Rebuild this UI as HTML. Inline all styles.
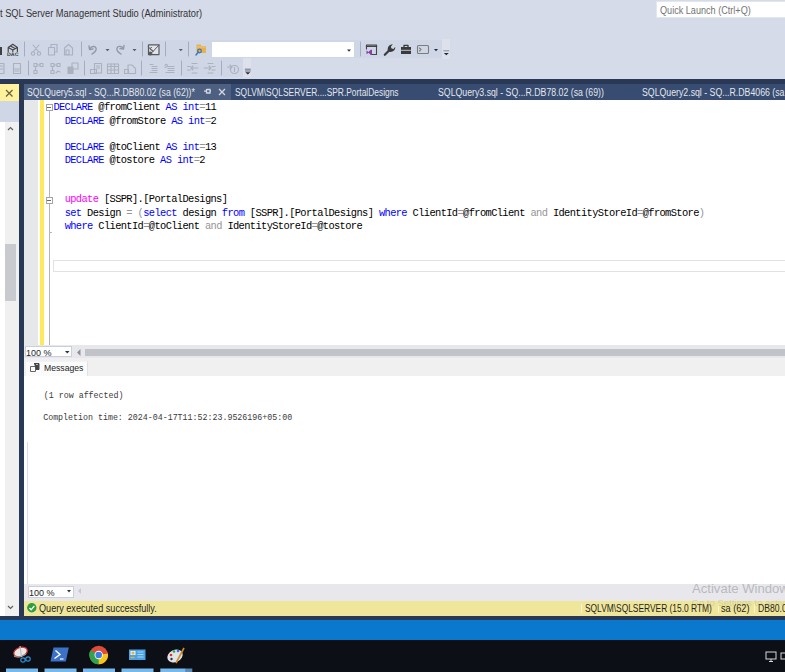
<!DOCTYPE html>
<html><head><meta charset="utf-8">
<style>
*{margin:0;padding:0;box-sizing:border-box}
html,body{width:785px;height:672px;overflow:hidden;background:#d6dbe9;font-family:"Liberation Sans",sans-serif}
.a{position:absolute}
.t{position:absolute;white-space:pre;transform-origin:0 0;line-height:1}
.code{position:absolute;font-family:"Liberation Mono",monospace;font-size:10.4px;letter-spacing:-0.625px;white-space:pre;line-height:13.16px;color:#000}
.k{color:#0000ff}.m{color:#ff00ff}.g{color:#959595}
.tab{color:#e3e7ef;font-size:10px}
svg{position:absolute;left:0;top:0;overflow:visible}
</style></head><body>
<!-- title -->
<div class="t" style="left:-0.5px;top:8.8px;font-size:10px;color:#333;transform:scaleX(0.927)">t SQL Server Management Studio (Administrator)</div>
<div class="a" style="left:656px;top:1px;width:129px;height:17px;background:#fff;border:1px solid #e3e6ee;border-right:none"></div>
<div class="t" style="left:660px;top:5.8px;font-size:10px;color:#747474;transform:scaleX(0.91)">Quick Launch (Ctrl+Q)</div>

<!-- toolbars -->
<div class="a" style="left:0;top:40px;width:442px;height:18px;background:#cfd6e5"></div>
<div class="a" style="left:442px;top:39px;width:8px;height:20px;background:#dde1ec"></div>
<div class="a" style="left:0;top:58px;width:243px;height:19px;background:#cfd6e5"></div>
<div class="a" style="left:243px;top:58px;width:8px;height:19px;background:#dde1ec"></div>
<div class="a" style="left:212px;top:42px;width:142px;height:15px;background:#fff"></div>

<svg width="785" height="80" viewBox="0 0 785 80">
 <g fill="none" stroke-linecap="round" stroke-linejoin="round">
  <!-- separators row1 -->
  <g stroke="#a5adbd" stroke-width="1">
   <line x1="24.5" y1="42" x2="24.5" y2="56"/><line x1="81.5" y1="42" x2="81.5" y2="56"/>
   <line x1="142.5" y1="42" x2="142.5" y2="56"/><line x1="165.5" y1="42" x2="165.5" y2="56"/>
   <line x1="188.5" y1="42" x2="188.5" y2="56"/><line x1="360.5" y1="42" x2="360.5" y2="56"/>
   <line x1="28.5" y1="61" x2="28.5" y2="75"/><line x1="84.5" y1="61" x2="84.5" y2="75"/>
   <line x1="141.5" y1="61" x2="141.5" y2="75"/><line x1="181.5" y1="61" x2="181.5" y2="75"/>
   <line x1="221.5" y1="61" x2="221.5" y2="75"/>
  </g>
  <!-- partial dark icon -->
  <path d="M-1 47h3v8h-3z" fill="#404040" stroke="none"/>
  <!-- DAC icon -->
  <path d="M8.2 51.5 V47.5 L12.8 44.3 L17.4 47.5 V51.5 M8.2 47.5 L12.8 50 L17.4 47.5 M12.8 50 V51.5 M10.5 46 L15 48.6" stroke="#454545" stroke-width="1.2"/>
  <path d="M7 52.2 h11.5 v3.8 h-11.5z" fill="#cfd6e5" stroke="none"/>
  <text x="7" y="56" font-size="5" font-family="Liberation Sans" font-weight="bold" fill="#3a3a3a" textLength="11.5" lengthAdjust="spacingAndGlyphs" style="text-rendering:geometricPrecision">DAC</text>
  <!-- scissors -->
  <g stroke="#abb1be" stroke-width="1.1">
   <path d="M33 45 L39 52 M39 45 L33 52"/><circle cx="33" cy="53.5" r="1.7"/><circle cx="39" cy="53.5" r="1.7"/>
  </g>
  <!-- copy -->
  <g stroke="#abb1be" stroke-width="1.1">
   <rect x="48.5" y="47.5" width="6" height="7.5"/><path d="M51 47.5 V44.5 H57 V52 H54.5"/>
  </g>
  <!-- paste -->
  <g stroke="#abb1be" stroke-width="1.1">
   <path d="M64.5 55 V48 L68.5 44.5 L72.5 48 V55 Z"/><rect x="66" y="50" width="3" height="4.5"/>
  </g>
  <!-- undo -->
  <path d="M89 46 L89.5 49.5 L93 49 M89.5 49 C92 45 97 46 96 50 C95.5 52 93.5 53 92 54" stroke="#9299a8" stroke-width="1.4"/>
  <path d="M105.5 49 h4 l-2 2.2z" fill="#5a5f6a" stroke="none"/>
  <!-- redo -->
  <path d="M124 45.5 L123.5 49 L120 48.5 M123.5 48.5 C121 45 116 46 117 50 C117.5 52 119.5 53 121 54" stroke="#9299a8" stroke-width="1.4"/>
  <path d="M132.5 49 h4 l-2 2.2z" fill="#5a5f6a" stroke="none"/>
  <!-- query designer -->
  <g stroke="#5a5a5a" stroke-width="1.2">
   <rect x="148.5" y="44.8" width="10.5" height="9.8" fill="#dfe3ec"/><path d="M148.5 47 L153 51.5 L159 45" stroke-width="1"/><path d="M151.5 47.5 c-2 0 -2 2.5 0 2.5 c2 0 2 2.5 0 2.5" stroke-width="1"/><circle cx="150.3" cy="53.5" r="1.5" fill="#5a5a5a"/>
  </g>
  <path d="M178.8 49 h4 l-2 2.2z" fill="#5a5f6a" stroke="none"/>
  <!-- folder key -->
  <path d="M196.5 44.5 h4 l1.2 1.5 h4.3 v7 h-9.5z" fill="#e8b04e" stroke="none"/><path d="M197.5 47 h8" stroke="#f3cf86" stroke-width="0.8"/>
  <circle cx="199.5" cy="51" r="1.8" stroke="#3878c0" stroke-width="1.3"/><path d="M198.3 52.3 L196 55" stroke="#3878c0" stroke-width="1.4"/>
  <!-- combobox arrow -->
  <path d="M347 49.5 h4 l-2 2.2z" fill="#333" stroke="none"/>
  <!-- VS window icon -->
  <g stroke="#444" stroke-width="1.1"><path d="M366.5 49 V45 H376.5 V54.5 H371"/><path d="M366.5 46.2 H376.5" stroke-width="1.6"/></g>
  <path d="M366.5 50.5 L368.5 52 L371 49.5 L372 50 V54.5 L371 55 L368.5 52.8 L366.5 54.3 Z" fill="#8a3fa8" stroke="none"/>
  <!-- wrench -->
  <path d="M384.8 54.8 L389.8 49.8" stroke="#3a3a3a" stroke-width="2.2"/>
  <path d="M388.2 51.5 C386.8 48.5 388.5 44.5 392.8 44.3 L390.8 46.8 L391.6 48.6 L393.6 48.9 L395.2 46.8 C395.6 50.8 392 52.8 388.2 51.5 Z" fill="#3a3a3a" stroke="none"/>
  <!-- toolbox -->
  <path d="M404 47.5 V45.3 H408 V47.5" stroke="#3a3a3a" stroke-width="1.3"/>
  <rect x="401" y="47" width="10" height="7" fill="#3a3a3a" stroke="none"/>
  <path d="M401.5 50.3 H410.5" stroke="#cfd6e5" stroke-width="0.9"/>
  <!-- console -->
  <g stroke="#7c7c7c" stroke-width="1.1"><rect x="417.5" y="45.5" width="11" height="8" rx="1"/><path d="M419.5 48 L421 49.5 L419.5 51"/></g>
  <path d="M434 49 h4 l-2 2.2z" fill="#1f2a44" stroke="none"/>
  <!-- overflow row1 -->
  <path d="M443.8 50.8 h5" stroke="#7a8296" stroke-width="0.9"/><path d="M443.8 53 h5 l-2.5 2.2z" fill="#1f2a44" stroke="none"/>

  <!-- row2 icons (disabled gray) -->
  <g stroke="#abb1be" stroke-width="1.1">
   <path d="M-1 63.5 H4 V73.5 H-1"/><path d="M0 66 h3 M0 69 h3"/>
   <rect x="13.5" y="63.5" width="7" height="10"/><path d="M13.5 69 h7 M15 71 h4"/>
   <rect x="34" y="63.5" width="3" height="3"/><rect x="40" y="63.5" width="3" height="3"/><rect x="34" y="70.5" width="3" height="3"/><path d="M37 65 h3 M35.5 66.5 v4"/>
   <rect x="51" y="63.5" width="3" height="3"/><rect x="57" y="63.5" width="3" height="3"/><rect x="51" y="70.5" width="3" height="3"/><path d="M54 65 h3 M52.5 66.5 v4 M56 73 l2 -2 l2 1"/>
   <rect x="72" y="63" width="6" height="6"/><rect x="68" y="67" width="5" height="6.5" fill="#abb1be"/>
   <rect x="94.5" y="63.5" width="7" height="9.5"/><path d="M90.5 69.5 h6 v4 h-6z M96.5 66 h3 M96.5 68 h3"/>
   <rect x="107.5" y="64" width="11" height="9.5"/><path d="M107.5 66.5 h11 M107.5 70 h11 M111 64 v9.5 M114.5 64 v9.5"/>
   <path d="M128 65 h4 l3.5 3.5 V73.5 H128 z"/><rect x="124.5" y="69.5" width="4" height="4"/>
   <path d="M150 64.5 h3 M152 66.5 h5 M152 68.5 h5 M152 70.5 h5 M150 72.5 h7"/>
   <path d="M165 65.5 c1 -2 3 -1 2 1 l-2 1 M168 66.5 h6 M168 68.5 h6 M168 70.5 h6 M166 72.5 h8"/>
   <path d="M192 63.5 h5 M187.5 66.5 h3 M187.5 70 h3 M191 68 h7 M193 66 l-2 2 l2 2 M192 73 h5"/>
   <path d="M208 63.5 h5 M212 66.5 h3 M212 70 h3 M204 68 h7 M209 66 l2 2 l-2 2 M208 73 h5"/>
   <circle cx="234.5" cy="69.5" r="4"/><path d="M227.5 67 h4 M230 65 l2 2 l-2 2 M234.5 67.5 v4"/>
  </g>
  <path d="M245.3 69.2 h5" stroke="#5a6275" stroke-width="0.9"/><path d="M245.3 71 h5" stroke="#5a6275" stroke-width="0.9"/><path d="M245.3 72.3 h5 l-2.5 2.2z" fill="#1f2a44" stroke="none"/>
 </g>
</svg>

<!-- navy background -->
<div class="a" style="left:0;top:78.5px;width:785px;height:542px;background:#293955"></div>

<!-- left panel -->
<div class="a" style="left:0;top:84px;width:18.5px;height:17px;background:#fff29d"></div>
<svg width="20" height="20" style="left:5px;top:89px"><path d="M1 1 L7.5 7.5 M7.5 1 L1 7.5" stroke="#6b6243" stroke-width="1.3"/></svg>
<div class="a" style="left:0;top:101px;width:18.5px;height:21px;background:#cfd6e5"></div>
<div class="a" style="left:0;top:122px;width:18.5px;height:494px;background:#fff"></div>
<div class="a" style="left:5px;top:122px;width:13.5px;height:494px;background:#f0f0f0"></div>
<div class="a" style="left:4.7px;top:244px;width:11.6px;height:57px;background:#c9cacf"></div>
<svg width="20" height="20" style="left:7px;top:125px"><path d="M1 5 L3.5 2.5 L6 5" stroke="#606060" stroke-width="1.2" fill="none"/></svg>
<svg width="20" height="20" style="left:7px;top:604px"><path d="M1 2 L3.5 4.5 L6 2" stroke="#606060" stroke-width="1.2" fill="none"/></svg>

<!-- doc tabs -->
<div class="a" style="left:24px;top:84px;width:761px;height:16px;background:#374c70"></div>
<div class="a" style="left:24px;top:84px;width:207px;height:16px;background:#4d6082"></div>
<div class="t tab" style="left:27px;top:88px;transform:scaleX(0.868)">SQLQuery5.sql - SQ...R.DB80.02 (sa (62))*</div>
<svg width="30" height="20" style="left:203px;top:88px">
 <path d="M1 3.2 H3.5 M3.5 1 V5.5 M3.5 1.5 H7 V5 H3.5 M7 3 H8" stroke="#d3d8e2" stroke-width="1.3" fill="none"/>
 <path d="M16 1 L22 7 M22 1 L16 7" stroke="#d3d8e2" stroke-width="1.3"/>
</svg>
<div class="t tab" style="left:235px;top:88px;transform:scaleX(0.840)">SQLVM\SQLSERVER....SPR.PortalDesigns</div>
<div class="t tab" style="left:438px;top:88px;transform:scaleX(0.875)">SQLQuery3.sql - SQ...R.DB78.02 (sa (69))</div>
<div class="t tab" style="left:642px;top:88px;transform:scaleX(0.875)">SQLQuery2.sql - SQ...R.DB4066 (sa (64))</div>

<!-- editor -->
<div class="a" style="left:24px;top:100px;width:761px;height:245px;background:#fff"></div>
<div class="a" style="left:24px;top:100px;width:14px;height:245px;background:#e6e7e8"></div>
<div class="a" style="left:40px;top:100px;width:4.2px;height:245px;background:#fde95a"></div>
<div class="a" style="left:49px;top:111px;width:1px;height:86px;background:#b5b5b5"></div>
<div class="a" style="left:49px;top:203.5px;width:1px;height:142px;background:#b5b5b5"></div>
<div class="a" style="left:49px;top:232px;width:3px;height:1px;background:#b5b5b5"></div>
<div class="a" style="left:45.8px;top:104px;width:7px;height:7px;border:1px solid #a5a5a5;background:#fff"></div>
<div class="a" style="left:47.3px;top:107px;width:4px;height:1px;background:#6a6a6a"></div>
<div class="a" style="left:45.8px;top:196.5px;width:7px;height:7px;border:1px solid #a5a5a5;background:#fff"></div>
<div class="a" style="left:47.3px;top:199.5px;width:4px;height:1px;background:#6a6a6a"></div>
<div class="a" style="left:53px;top:259.5px;width:732px;height:12.5px;border:1px solid #e2e2e6;border-right:none"></div>

<div class="code" style="left:53.4px;top:101.4px"><span class="k">DECLARE</span> @fromClient <span class="k">AS</span> <span class="k">int</span><span class="g">=</span>11
  <span class="k">DECLARE</span> @fromStore <span class="k">AS</span> <span class="k">int</span><span class="g">=</span>2

  <span class="k">DECLARE</span> @toClient <span class="k">AS</span> <span class="k">int</span><span class="g">=</span>13
  <span class="k">DECLARE</span> @tostore <span class="k">AS</span> <span class="k">int</span><span class="g">=</span>2


  <span class="m">update</span> [SSPR].[PortalDesigns]
  <span class="k">set</span> Design <span class="g">=</span> <span class="g">(</span><span class="k">select</span> design <span class="k">from</span> [SSPR].[PortalDesigns] <span class="k">where</span> ClientId<span class="g">=</span>@fromClient <span class="g">and</span> IdentityStoreId<span class="g">=</span>@fromStore<span class="g">)</span>
  <span class="k">where</span> ClientId<span class="g">=</span>@toClient <span class="g">and</span> IdentityStoreId<span class="g">=</span>@tostore</div>

<!-- zoom bar 1 -->
<div class="a" style="left:24px;top:345px;width:761px;height:13px;background:#e8e8ec"></div>
<div class="a" style="left:24.5px;top:346px;width:47px;height:11px;background:#fff;border:1px solid #c9cfdc"></div>
<div class="t" style="left:26.3px;top:347.6px;font-size:9.5px;color:#1e1e1e;transform:scaleX(0.95)">100 %</div>
<svg width="10" height="10" style="left:64.5px;top:351px"><path d="M0 0 h4.5 l-2.25 2.5z" fill="#333"/></svg>
<svg width="10" height="10" style="left:76.5px;top:348.5px"><path d="M3.5 0 v7 l-3.5 -3.5z" fill="#8e8e9a"/></svg>
<div class="a" style="left:85px;top:349px;width:700px;height:7px;background:#c2c3c9"></div>

<!-- results tabs -->
<div class="a" style="left:24px;top:358px;width:761px;height:18px;background:#f0f0f0"></div>
<div class="a" style="left:25.5px;top:361px;width:62.5px;height:15px;background:#fbfbfb;border-right:1px solid #e2e2e4;border-top:1px solid #f3f3f3"></div>
<svg width="12" height="12" style="left:30px;top:363px"><path d="M0.5 3.5 h5 v5 h-5z" stroke="#666" fill="none"/><path d="M4 0.5 h5 v6 h-3" stroke="#444" fill="#444"/><path d="M6 1.5 h2" stroke="#bbb"/></svg>
<div class="t" style="left:43.5px;top:364px;font-size:9px;color:#1e1e1e;transform:scaleX(0.96)">Messages</div>

<!-- results content -->
<div class="a" style="left:24px;top:376px;width:761px;height:208px;background:#fff"></div>
<div class="code" style="font-size:8.3px;letter-spacing:0;left:43.8px;top:389.6px;line-height:11px;color:#3a3a3a">(1 row affected)</div>
<div class="code" style="font-size:8.3px;letter-spacing:0;left:43.2px;top:412px;line-height:11px;color:#3a3a3a">Completion time: 2024-04-17T11:52:23.9526196+05:00</div>

<div class="a" style="left:26.5px;top:442px;width:1px;height:142px;background:#dcdcde"></div>
<!-- zoom bar 2 -->
<div class="a" style="left:24px;top:584px;width:761px;height:16.5px;background:#e8e8ec"></div>
<div class="a" style="left:27.5px;top:585.5px;width:46px;height:12px;background:#fff;border:1px solid #c9cfdc"></div>
<div class="t" style="left:29px;top:587.6px;font-size:9.5px;color:#1e1e1e;transform:scaleX(0.95)">100 %</div>
<svg width="10" height="10" style="left:67px;top:590px"><path d="M0 0 h4 l-2 2.5z" fill="#333"/></svg>
<svg width="10" height="10" style="left:78px;top:588px"><path d="M3 0 v6 l-3 -3z" fill="#c8c8d0"/></svg>

<!-- status bar -->
<div class="a" style="left:24px;top:600.5px;width:761px;height:15px;background:#efe69a"></div>
<svg width="12" height="12" style="left:26.5px;top:603px"><circle cx="4.8" cy="4.8" r="4.7" fill="#2e9d3f"/><path d="M2.5 5 L4.2 6.8 L7.3 3" stroke="#fff" stroke-width="1.3" fill="none"/></svg>
<div class="t" style="left:39px;top:604px;font-size:10px;color:#1e1e1e;transform:scaleX(0.910)">Query executed successfully.</div>
<div class="a" style="left:581px;top:603.5px;width:1px;height:9px;background:#f8f4d8"></div>
<div class="t" style="left:585px;top:604.3px;font-size:10px;color:#1e1e1e;transform:scaleX(0.839)">SQLVM\SQLSERVER (15.0 RTM)</div>
<div class="a" style="left:717.5px;top:603.5px;width:1px;height:9px;background:#f8f4d8"></div>
<div class="t" style="left:721px;top:604.3px;font-size:10px;color:#1e1e1e;transform:scaleX(0.916)">sa (62)</div>
<div class="a" style="left:753.5px;top:603.5px;width:1px;height:9px;background:#f8f4d8"></div>
<div class="t" style="left:758px;top:604.3px;font-size:10px;color:#1e1e1e;transform:scaleX(0.86)">DB80.02</div>

<!-- windows bars -->
<div class="a" style="left:0;top:620px;width:785px;height:19.5px;background:#0a78cc"></div>
<div class="a" style="left:0;top:639.5px;width:785px;height:33px;background:#0c0f16"></div>
<!-- taskbar icons -->
<svg width="785" height="672" style="left:0;top:0">
 <!-- snipping tool -->
 <ellipse cx="20.5" cy="652" rx="7" ry="4.5" fill="#e8e8e8" stroke="#d03030" stroke-width="1.2" transform="rotate(-20 20.5 652)"/>
 <path d="M14 656 C17 658 21 657 26 654" stroke="#9a9a9a" stroke-width="1.2" fill="none"/>
 <path d="M20 646 L21.5 657" stroke="#bbb" stroke-width="1.2"/>
 <circle cx="23" cy="660" r="2.2" fill="none" stroke="#2d8fd0" stroke-width="1.2"/><circle cx="28" cy="659" r="2.2" fill="none" stroke="#2d8fd0" stroke-width="1.2"/>
 <!-- powershell -->
 <path d="M53.5 647.5 H68.8 L65.8 661.5 H50.5 Z" fill="#3b72c8"/>
 <path d="M55.5 650.5 L60 654.5 L54.5 658.5" stroke="#fff" stroke-width="1.4" fill="none"/><path d="M60 659 H63.5" stroke="#fff" stroke-width="1.2"/>
 <!-- chrome -->
 <circle cx="98.7" cy="655" r="9.3" fill="#dd4b39"/>
 <path d="M98.7 655 L90.6 659.7 A9.3 9.3 0 0 1 90.6 650.3 Z" fill="#2ea44f"/>
 <path d="M98.7 655 L90.6 659.7 A9.3 9.3 0 0 0 98.7 664.3 L103 656 Z" fill="#2ea44f"/>
 <path d="M98.7 655 L107.9 653.5 A9.3 9.3 0 0 1 98.7 664.3 Z" fill="#f5c518"/>
 <circle cx="98.7" cy="655" r="4.2" fill="#fff"/><circle cx="98.7" cy="655" r="3.3" fill="#3b7de0"/>
 <!-- control panel like -->
 <rect x="129" y="649.5" width="16.5" height="10.5" fill="#4aa3e6"/>
 <rect x="130.5" y="651" width="5" height="4" fill="#e8f4fc"/><circle cx="133" cy="653" r="1.6" fill="#f0b030"/>
 <path d="M137.5 652 h6 M137.5 654.5 h6 M137.5 657 h6" stroke="#a9d6f5" stroke-width="1"/>
 <path d="M130.5 657.5 h4" stroke="#f0b030" stroke-width="1.2"/>
 <!-- paint -->
 <ellipse cx="175" cy="656" rx="8" ry="6" fill="#dfe4ea" transform="rotate(-25 175 656)"/>
 <circle cx="171" cy="655" r="1.3" fill="#e03030"/><circle cx="174" cy="651.5" r="1.3" fill="#30a040"/><circle cx="178" cy="651" r="1.3" fill="#3070e0"/><circle cx="171.5" cy="659" r="1.2" fill="#333"/>
 <path d="M184 648 L176 663" stroke="#d58a2a" stroke-width="1.6"/>
 <!-- underlines -->
 <rect x="6" y="668.5" width="32" height="3.5" fill="#76b9ed"/>
 <rect x="44.5" y="668.5" width="32" height="3.5" fill="#76b9ed"/>
 <rect x="83" y="668.5" width="32" height="3.5" fill="#76b9ed"/>
 <rect x="121.5" y="668.5" width="32" height="3.5" fill="#76b9ed"/>
 <rect x="160.3" y="668.5" width="25.5" height="3.5" fill="#76b9ed"/><rect x="185.8" y="668.5" width="6.5" height="3.5" fill="#5a8bb5"/>
 <!-- tray icon -->
 <rect x="766" y="652" width="10" height="7" fill="none" stroke="#d8d8d8" stroke-width="1"/><path d="M769 661.5 h4 M771 659 v2.5" stroke="#d8d8d8"/>
 <rect x="781" y="653" width="6" height="6" fill="none" stroke="#d8d8d8" stroke-width="1"/>
</svg>
<div class="t" style="left:691.5px;top:581.5px;font-size:13.5px;color:#b9b9be;transform:scaleX(0.97)">Activate Windows</div>
<div class="t" style="left:691.5px;top:598.3px;font-size:9.5px;color:rgba(150,150,150,0.3)">Go to Settings to activate Windows.</div>
</body></html>
